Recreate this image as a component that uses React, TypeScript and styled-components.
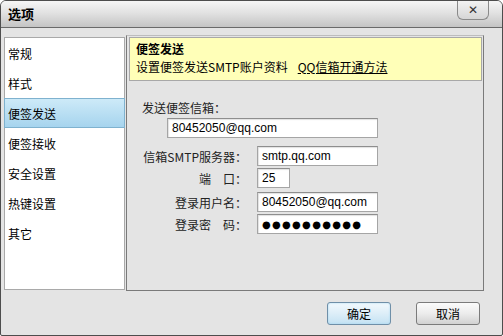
import React from "react";
import styled, { createGlobalStyle } from "styled-components";

const Global = createGlobalStyle`
  html, body { margin: 0; padding: 0; background: #ffffff; }
  body { font-family: "Noto Sans CJK SC", "Liberation Sans", sans-serif; font-size: 12px; color: #000; }
`;

const Window = styled.div`
  box-sizing: border-box;
  width: 503px;
  height: 336px;
  border: 1px solid #4d4d4d;
  border-radius: 6px 6px 2px 2px;
  background: #e4e4e4;
  display: flex;
  flex-direction: column;
  overflow: hidden;
  position: relative;
`;

const TitleBar = styled.div`
  height: 26px;
  flex: none;
  display: flex;
  align-items: center;
  padding-left: 7px;
  background: linear-gradient(#f6f6f6 0%, #e2e2e2 45%, #c4c4c4 100%);
  border-bottom: 1px solid #6a6a6a;
`;

const Title = styled.span`
  font-weight: bold;
  font-size: 13px;
  line-height: 14px;
`;

const CloseButton = styled.div`
  position: absolute;
  top: -1px;
  left: 456px;
  width: 32px;
  height: 20px;
  box-sizing: border-box;
  border: 1px solid #8a8a8a;
  border-top: none;
  border-radius: 0 0 6px 6px;
  background: linear-gradient(#f4f4f4, #d6d6d6);
  display: flex;
  align-items: center;
  justify-content: center;
  font-family: "DejaVu Sans", sans-serif;
  font-weight: bold;
  font-size: 12px;
  color: #333;
`;

const Content = styled.div`
  display: flex;
  align-items: flex-start;
  padding: 7px 0 0 3px;
  gap: 1px;
`;

const NavList = styled.div`
  box-sizing: border-box;
  margin-top: 2px;
  width: 121px;
  height: 253px;
  background: #fff;
  border: 1px solid #a9a9a9;
  display: flex;
  flex-direction: column;
`;

const NavItem = styled.div<{ $active?: boolean }>`
  box-sizing: border-box;
  height: 30px;
  display: flex;
  align-items: center;
  padding-left: 3px;
  font-size: 12px;
  border: 1px solid ${(p) => (p.$active ? "#7fb2cf" : "transparent")};
  background: ${(p) => (p.$active ? "linear-gradient(#cdeaf8, #a6d4ee)" : "transparent")};
  margin: 0 -1px;
`;

const Panel = styled.div`
  box-sizing: border-box;
  width: 358px;
  height: 256px;
  border: 1px solid #7a7a7a;
  border-top-color: #bdbdbd;
  padding: 1px 1px 0 2px;
`;

const Banner = styled.div`
  box-sizing: border-box;
  width: 353px;
  height: 44px;
  background: #ffffb8;
  border: 1px solid #a8a8a8;
  padding: 2px 0 0 6px;
  display: flex;
  flex-direction: column;
`;

const BannerTitle = styled.div`
  font-weight: bold;
  font-size: 12px;
  line-height: 18px;
`;

const BannerLine = styled.div`
  display: flex;
  font-size: 12px;
  line-height: 18px;
  gap: 10px;
`;

const Link = styled.span`
  text-decoration: underline;
`;

const Form = styled.div`
  padding: 19px 0 0 13px;
  display: flex;
  flex-direction: column;
`;

const TopLabel = styled.div`
  font-size: 12px;
  line-height: 16px;
  color: #222;
`;

const WideInputWrap = styled.div`
  margin: 2px 0 0 25px;
`;

const Row = styled.div<{ $mt: number }>`
  display: grid;
  grid-template-columns: 105px auto;
  column-gap: 10px;
  align-items: center;
  margin-top: ${(p) => p.$mt}px;
`;

const RowLabel = styled.div`
  text-align: right;
  font-size: 12px;
  color: #222;
  white-space: pre;
`;

const Input = styled.div<{ $w: number }>`
  box-sizing: border-box;
  width: ${(p) => p.$w}px;
  height: 20px;
  background: #fff;
  border: 1px solid #a5a5a5;
  border-top-color: #8e8e8e;
  box-shadow: inset 1px 1px 1px rgba(0, 0, 0, 0.12);
  display: flex;
  align-items: center;
  padding-left: 4px;
  font-family: "Liberation Sans", sans-serif;
  font-size: 12px;
  color: #000;
`;

const Dots = styled.span`
  font-family: "DejaVu Sans", sans-serif;
  font-size: 10px;
  letter-spacing: 1.3px;
`;

const Footer = styled.div`
  display: flex;
  justify-content: flex-end;
  gap: 25px;
  padding: 11px 22px 0 0;
`;

const Button = styled.div<{ $primary?: boolean }>`
  box-sizing: border-box;
  width: 64px;
  height: 23px;
  border-radius: 3px;
  border: 1px solid ${(p) => (p.$primary ? "#6f8fa8" : "#7b7b7b")};
  background: ${(p) =>
    p.$primary
      ? "linear-gradient(#f2f9fd 0%, #ddeef8 50%, #c4e2f3 100%)"
      : "linear-gradient(#fbfbfb 0%, #ececec 50%, #d2d2d2 100%)"};
  box-shadow: ${(p) => (p.$primary ? "inset 0 0 2px #9fd3ef" : "none")};
  display: flex;
  align-items: center;
  justify-content: center;
  font-size: 12px;
`;

export default function App() {
  const nav = ["常规", "样式", "便签发送", "便签接收", "安全设置", "热键设置", "其它"];
  return (
    <>
      <Global />
      <Window>
        <TitleBar>
          <Title>选项</Title>
        </TitleBar>
        <CloseButton>✕</CloseButton>
        <Content>
          <NavList>
            {nav.map((n) => (
              <NavItem key={n} $active={n === "便签发送"}>
                {n}
              </NavItem>
            ))}
          </NavList>
          <Panel>
            <Banner>
              <BannerTitle>便签发送</BannerTitle>
              <BannerLine>
                <span>设置便签发送SMTP账户资料</span>
                <Link>QQ信箱开通方法</Link>
              </BannerLine>
            </Banner>
            <Form>
              <TopLabel>发送便签信箱：</TopLabel>
              <WideInputWrap>
                <Input $w={211}>80452050@qq.com</Input>
              </WideInputWrap>
              <Row $mt={8}>
                <RowLabel>信箱SMTP服务器：</RowLabel>
                <Input $w={121}>smtp.qq.com</Input>
              </Row>
              <Row $mt={2}>
                <RowLabel>{"端　口："}</RowLabel>
                <Input $w={33}>25</Input>
              </Row>
              <Row $mt={4}>
                <RowLabel>登录用户名：</RowLabel>
                <Input $w={121}>80452050@qq.com</Input>
              </Row>
              <Row $mt={2}>
                <RowLabel>{"登录密　码："}</RowLabel>
                <Input $w={121}>
                  <Dots>●●●●●●●●●●</Dots>
                </Input>
              </Row>
            </Form>
          </Panel>
        </Content>
        <Footer>
          <Button $primary>确定</Button>
          <Button>取消</Button>
        </Footer>
      </Window>
    </>
  );
}
